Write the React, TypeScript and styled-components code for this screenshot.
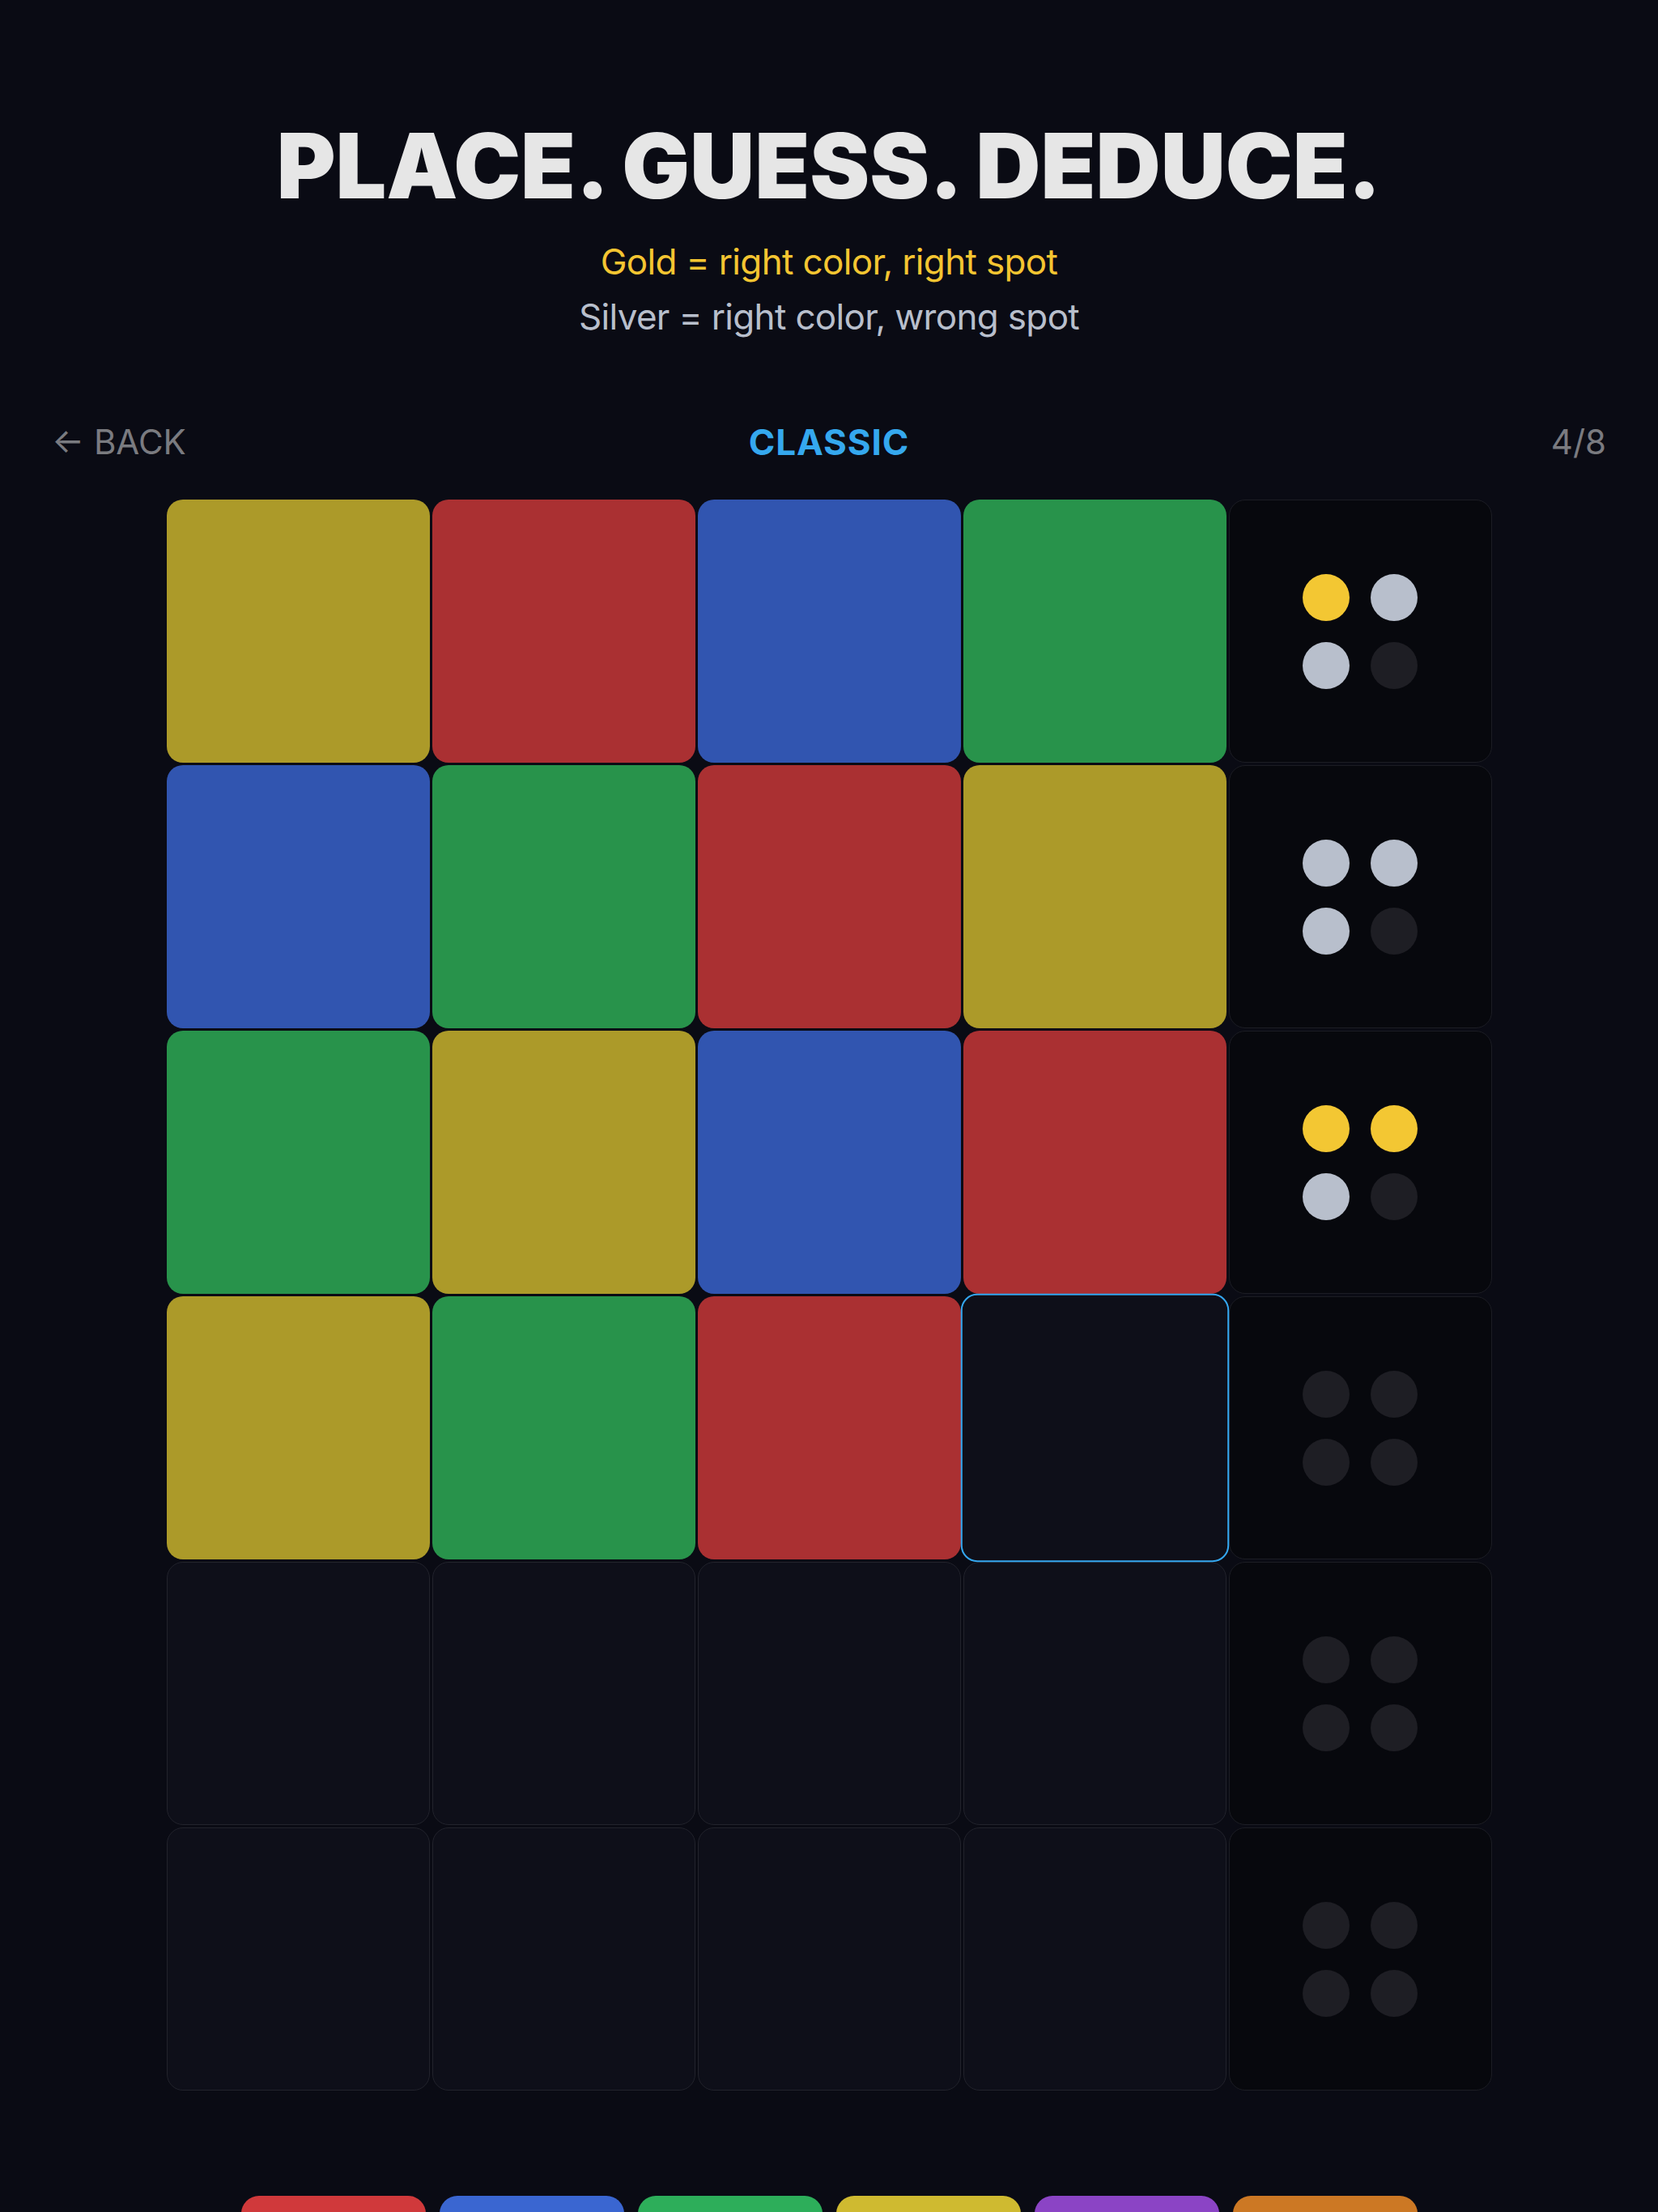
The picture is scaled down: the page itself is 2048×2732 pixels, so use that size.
import React from "react"
import styled, { createGlobalStyle } from "styled-components"

const GlobalStyle = createGlobalStyle`
  html, body {
    margin: 0;
    padding: 0;
    background: #0a0b14;
  }
  body {
    font-family: Inter, "Noto Sans", sans-serif;
    color: #e6e6e6;
  }
`

type Peg = "Y" | "R" | "B" | "G" | null
type Hint = "gold" | "silver" | "none"

const cellColors: Record<string, string> = {
  Y: "#ac9a29",
  R: "#aa3032",
  B: "#3155b0",
  G: "#28934b",
}

const hintColors: Record<Hint, string> = {
  gold: "#f3c733",
  silver: "#b8bfcc",
  none: "#1e1e24",
}

const paletteColors = ["#d0393b", "#3a66d1", "#2dae5a", "#cfba30", "#8b44c5", "#cc7824"]

const rows: { pegs: Peg[]; hints: Hint[] }[] = [
  { pegs: ["Y", "R", "B", "G"], hints: ["gold", "silver", "silver", "none"] },
  { pegs: ["B", "G", "R", "Y"], hints: ["silver", "silver", "silver", "none"] },
  { pegs: ["G", "Y", "B", "R"], hints: ["gold", "gold", "silver", "none"] },
  { pegs: ["Y", "G", "R", null], hints: ["none", "none", "none", "none"] },
  { pegs: [null, null, null, null], hints: ["none", "none", "none", "none"] },
  { pegs: [null, null, null, null], hints: ["none", "none", "none", "none"] },
]

const Page = styled.div`
  width: 2048px;
  height: 2732px;
  overflow: hidden;
  display: flex;
  flex-direction: column;
  align-items: center;
`

const Title = styled.h1`
  margin: 149px 0 0;
  font-size: 111px;
  line-height: 1;
  font-weight: 900;
  letter-spacing: 0;
  color: #e6e6e6;
`

const Legend = styled.div`
  margin-top: 29px;
  text-align: center;
  font-size: 44px;
  line-height: 68px;
  letter-spacing: -0.015em;
`

const LegendLine = styled.div<{ $tone: "gold" | "silver" }>`
  color: ${(p) => (p.$tone === "gold" ? "#f4c531" : "#b8bfcc")};
`

const Nav = styled.div`
  box-sizing: border-box;
  width: 100%;
  margin-top: 91px;
  padding: 0 64px;
  display: grid;
  grid-template-columns: 1fr auto 1fr;
  align-items: center;
  font-size: 42px;
  line-height: 60px;
`

const BackButton = styled.div`
  color: #7a7b80;
  justify-self: start;
`

const ModeLabel = styled.div`
  color: #35a8ee;
  font-size: 44px;
  font-weight: 700;
  letter-spacing: 0.02em;
`

const Progress = styled.div`
  color: #7a7b80;
  justify-self: end;
`

const Board = styled.div`
  margin-top: 41px;
  display: grid;
  grid-template-columns: repeat(5, 325px);
  grid-auto-rows: 325px;
  gap: 3px;
`

const Cell = styled.div<{ $color?: string; $active?: boolean }>`
  box-sizing: border-box;
  border-radius: 20px;
  background: ${(p) => p.$color ?? "#0e0f19"};
  border: ${(p) =>
    p.$active ? "2px solid #34a6ee" : p.$color ? "none" : "1px solid #22232c"};
  transform: ${(p) => (p.$active ? "scale(1.02)" : "none")};
`

const HintBox = styled.div`
  box-sizing: border-box;
  border-radius: 20px;
  background: #07080d;
  border: 1px solid #1c1d24;
  display: grid;
  grid-template-columns: repeat(2, 58px);
  grid-auto-rows: 58px;
  gap: 26px;
  place-content: center;
`

const Dot = styled.div<{ $kind: Hint }>`
  border-radius: 50%;
  background: ${(p) => hintColors[p.$kind]};
`

const Palette = styled.div`
  margin-top: 130px;
  display: flex;
  gap: 17px;
`

const Swatch = styled.div<{ $color: string }>`
  width: 228px;
  height: 100px;
  border-radius: 22px;
  background: ${(p) => p.$color};
`

export default function App() {
  return (
    <>
      <GlobalStyle />
      <Page>
        <Title>PLACE. GUESS. DEDUCE.</Title>
        <Legend>
          <LegendLine $tone="gold">Gold = right color, right spot</LegendLine>
          <LegendLine $tone="silver">Silver = right color, wrong spot</LegendLine>
        </Legend>
        <Nav>
          <BackButton>← BACK</BackButton>
          <ModeLabel>CLASSIC</ModeLabel>
          <Progress>4/8</Progress>
        </Nav>
        <Board>
          {rows.map((row, r) => (
            <React.Fragment key={r}>
              {row.pegs.map((peg, c) => (
                <Cell
                  key={c}
                  $color={peg ? cellColors[peg] : undefined}
                  $active={r === 3 && c === 3}
                />
              ))}
              <HintBox>
                {row.hints.map((h, i) => (
                  <Dot key={i} $kind={h} />
                ))}
              </HintBox>
            </React.Fragment>
          ))}
        </Board>
        <Palette>
          {paletteColors.map((c) => (
            <Swatch key={c} $color={c} />
          ))}
        </Palette>
      </Page>
    </>
  )
}
